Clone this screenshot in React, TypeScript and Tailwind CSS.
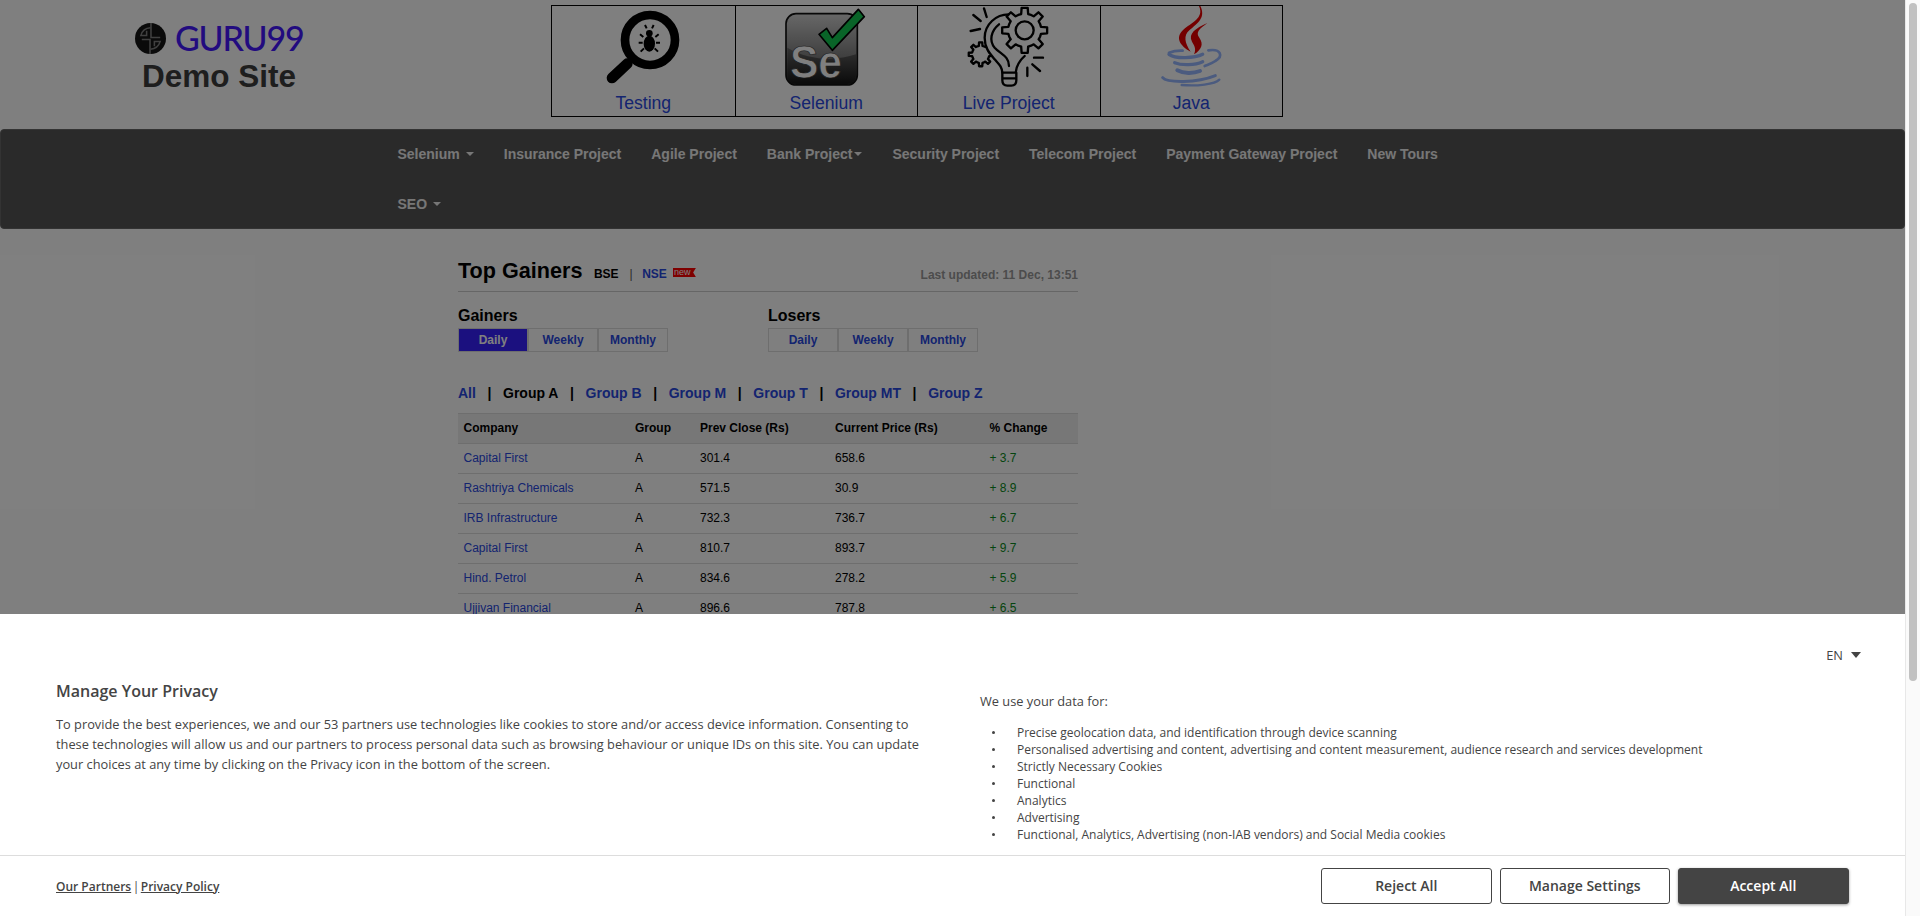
const arial = "font-['Liberation_Sans',Arial,sans-serif]";
const open = "font-['Open_Sans',sans-serif]";

const navItems = [
  { label: "Selenium", caret: true },
  { label: "Insurance Project" },
  { label: "Agile Project" },
  { label: "Bank Project", caret: true, tight: true },
  { label: "Security Project" },
  { label: "Telecom Project" },
  { label: "Payment Gateway Project" },
  { label: "New Tours" },
  { label: "SEO", caret: true },
];

const rows = [
  ["Capital First", "301.4", "658.6", "+ 3.7"],
  ["Rashtriya Chemicals", "571.5", "30.9", "+ 8.9"],
  ["IRB Infrastructure", "732.3", "736.7", "+ 6.7"],
  ["Capital First", "810.7", "893.7", "+ 9.7"],
  ["Hind. Petrol", "834.6", "278.2", "+ 5.9"],
  ["Ujjivan Financial", "896.6", "787.8", "+ 6.5"],
];

const groups = ["Group B", "Group M", "Group T", "Group MT", "Group Z"];

const uses = [
  "Precise geolocation data, and identification through device scanning",
  "Personalised advertising and content, advertising and content measurement, audience research and services development",
  "Strictly Necessary Cookies",
  "Functional",
  "Analytics",
  "Advertising",
  "Functional, Analytics, Advertising (non-IAB vendors) and Social Media cookies",
];

function gearPath(cx: number, cy: number, outer: number, inner: number, teeth: number) {
  const pts: string[] = [];
  for (let i = 0; i < teeth; i++) {
    const a = (i / teeth) * Math.PI * 2;
    const w = (Math.PI * 2) / teeth;
    const steps: [number, number][] = [
      [inner, -0.5 * w],
      [inner, -0.27 * w],
      [outer, -0.17 * w],
      [outer, 0.17 * w],
      [inner, 0.27 * w],
    ];
    for (const [r, o] of steps) {
      pts.push(`${(cx + r * Math.cos(a + o)).toFixed(1)} ${(cy + r * Math.sin(a + o)).toFixed(1)}`);
    }
  }
  return "M" + pts.join("L") + "Z";
}

function TestingIcon() {
  return (
    <svg viewBox="129 15 300 252" className="w-[100px] h-[84px]">
      <circle cx="300" cy="117" r="75" fill="none" stroke="#000" strokeWidth="26" />
      <line x1="232" y1="188" x2="186" y2="231" stroke="#000" strokeWidth="32" strokeLinecap="round" />
      <ellipse cx="298" cy="128" rx="17" ry="24" fill="#000" />
      <circle cx="298" cy="97" r="10" fill="#000" />
      <path
        d="M290 82l-5-10M306 82l5-10M280 108l-10-8M316 108l10-8M278 125h-12M318 125h12M282 142l-10 10M314 142l10 10"
        stroke="#000"
        strokeWidth="6"
        fill="none"
      />
    </svg>
  );
}

function SeleniumIcon() {
  return (
    <svg viewBox="138 15 300 252" className="w-[100px] h-[84px]">
      <defs>
        <linearGradient id="se-bg" x1="0" y1="0" x2="0" y2="1">
          <stop offset="0" stopColor="#d0d0d0" />
          <stop offset="0.6" stopColor="#808080" />
          <stop offset="1" stopColor="#1c1c1c" />
        </linearGradient>
        <linearGradient id="se-low" x1="0" y1="0" x2="0" y2="1">
          <stop offset="0" stopColor="#666" />
          <stop offset="1" stopColor="#161616" />
        </linearGradient>
      </defs>
      <rect x="168" y="38" width="214" height="214" rx="30" fill="url(#se-bg)" stroke="#111" strokeWidth="5" />
      <path d="M172 140C240 180 320 180 378 160V222Q378 248 352 248H198Q172 248 172 222Z" fill="url(#se-low)" />
      <text
        x="180"
        y="232"
        fontFamily="Liberation Sans, Arial, sans-serif"
        fontWeight="700"
        fontSize="136"
        textLength="156"
        lengthAdjust="spacingAndGlyphs"
        fill="#fff"
        stroke="#333"
        strokeWidth="2"
      >
        Se
      </text>
      <path d="M267 100L290 82L307 110L385 25L403 47L307 148Z" fill="#12c850" stroke="#000" strokeWidth="5" strokeLinejoin="round" />
    </svg>
  );
}

function LiveIcon() {
  return (
    <svg viewBox="115 15 300 252" className="w-[100px] h-[84px]">
      <g fill="#fff" stroke="#000" strokeWidth="7" strokeLinejoin="round" strokeLinecap="round">
        <path d={gearPath(180, 160, 36, 26, 8)} />
        <path d="M268 40C225 38 192 72 192 110C192 140 205 155 222 175C235 190 243 195 245 215L285 215C287 195 295 180 312 165L300 60Z" stroke="none" />
        <path d="M268 40C225 38 192 72 192 110C192 140 205 155 222 175C235 190 243 195 245 215L285 215C287 195 295 180 312 165" fill="none" />
        <path d="M235 70C210 90 205 120 222 140C240 160 265 165 265 195" fill="none" />
        <path d={gearPath(312, 88, 68, 50, 8)} />
        <circle cx="312" cy="88" r="27" />
        <path d="M245 215V238Q245 254 260 254H272Q287 254 287 238V215M245 232H287" fill="none" />
        <path d="M190 22L198 48M158 42L180 60M150 90L178 84M340 170H367M335 190L358 210M320 200V225" fill="none" />
      </g>
    </svg>
  );
}

function JavaIcon() {
  return (
    <svg viewBox="123 15 300 252" className="w-[100px] h-[84px]">
      <path d="M297 15C314 52 272 66 250 86C224 110 240 134 272 152C254 126 250 104 268 88C294 66 318 50 301 15Z" fill="#e80000" />
      <path d="M322 66C286 82 264 98 276 122C286 138 288 146 282 160C304 146 312 130 298 110C286 94 298 84 322 66Z" fill="#e80000" />
      <g fill="none" stroke="#96b6ff" strokeLinecap="round">
        <path d="M207 155Q225 148 248 149" strokeWidth="8" />
        <path d="M207 160C225 174 285 172 308 160" strokeWidth="10" />
        <path d="M325 148C364 142 370 166 346 180C336 187 326 190 314 195" strokeWidth="8" />
        <path d="M224 185C245 194 285 193 308 182" strokeWidth="10" />
        <path d="M232 208C250 218 280 218 300 210" strokeWidth="12" />
        <path d="M188 230C200 245 290 247 346 224" strokeWidth="9" />
        <path d="M245 252C290 256 345 250 358 236" strokeWidth="7" />
      </g>
    </svg>
  );
}

function LogoMark() {
  return (
    <svg viewBox="0 0 32 32" className="w-[31px] h-[31px] shrink-0">
      <circle cx="16" cy="16" r="16" fill="#141414" />
      <g fill="none" stroke="#808080" strokeWidth="1.6">
        <path d="M16.5 0V15H26" />
        <path d="M15.5 32V17H7" />
        <path d="M16 5A11 11 0 0 0 6 13H12V8" />
        <path d="M16 27A11 11 0 0 0 26 19H20V24" />
      </g>
    </svg>
  );
}

function Tabs({ active }: { active: boolean }) {
  return (
    <div className="flex mt-[2px]">
      {["Daily", "Weekly", "Monthly"].map((t, i) => (
        <div
          key={t}
          className={`w-[70px] h-[24px] flex items-center justify-center text-[12px] font-bold border border-[#ddd] ${
            i === 0 && active ? "bg-[#3620ff] text-white" : "text-[#2848e0]"
          }`}
        >
          {t}
        </div>
      ))}
    </div>
  );
}

export default function App() {
  const tiles = [
    { label: "Testing", icon: <TestingIcon /> },
    { label: "Selenium", icon: <SeleniumIcon /> },
    { label: "Live Project", icon: <LiveIcon /> },
    { label: "Java", icon: <JavaIcon /> },
  ];

  return (
    <div className={`relative flex h-[916px] overflow-hidden bg-white ${arial}`}>
      <div className="relative w-[1905px] shrink-0 overflow-hidden">
        {/* header */}
        <div className="flex h-[129px]">
          <div className="w-[551px] shrink-0 pl-[135px] pt-[22px]">
            <div className="flex items-center h-[32px] gap-[9px]">
              <LogoMark />
              <span className="font-['Lato',sans-serif] text-[34px] tracking-[-1.2px] leading-none font-medium text-[#4416ff]">GURU99</span>
            </div>
            <div className="pl-[7px] mt-[4px] text-[31.5px] leading-[36px] font-bold text-[#3c3c3c]">Demo Site</div>
          </div>
          <div className="flex h-[112px] mt-[5px] border border-black">
            {tiles.map((t, i) => (
              <div
                key={t.label}
                className={`w-[182.5px] flex flex-col items-center ${i > 0 ? "border-l border-black" : ""}`}
              >
                {t.icon}
                <div className="text-[17.6px] leading-[20px] mt-[3px] text-[#2848e0]">{t.label}</div>
              </div>
            ))}
          </div>
        </div>

        {/* nav */}
        <div className="h-[100px] rounded bg-[#555] border border-[#666] pl-[381.5px]">
          <div className="flex flex-wrap w-[1100px] -mt-[1px]">
            {navItems.map((n) => (
              <div key={n.label} className="h-[50px] px-[15px] flex items-center text-[14px] font-bold text-[#eee]">
                {n.label}
                {n.caret && (
                  <span
                    className={`${n.tight ? "ml-[2px]" : "ml-[6px]"} w-0 h-0 border-x-[4px] border-x-transparent border-t-[4px] border-t-[#eee]`}
                  />
                )}
              </div>
            ))}
          </div>
        </div>

        {/* gainers */}
        <div className="w-[620px] ml-[458px] mt-[27px]">
          <div className="flex items-end h-[36px] pb-[7px] border-b border-[#ccc]">
            <span className="text-[21.6px] leading-[26px] font-bold text-black">Top Gainers</span>
            <span className="ml-[11.5px] text-[12px] leading-[20px] font-bold text-black">BSE</span>
            <span className="ml-[11px] text-[12px] leading-[20px] text-[#555]">|</span>
            <span className="ml-[9.5px] text-[12px] leading-[20px] font-bold text-[#2848e0]">NSE</span>
            <span className="relative -top-[7px] ml-[6px] h-[9px] w-[23px] bg-[#ff0000] text-white text-[9px] leading-[8px] pl-[1px] [clip-path:polygon(0_0,100%_0,88%_50%,100%_100%,0_100%)]">
              new
            </span>
            <span className="ml-auto text-[12px] leading-[14px] font-bold text-[#999] mb-[2px]">
              Last updated: 11 Dec, 13:51
            </span>
          </div>

          <div className="flex mt-[14px]">
            <div className="w-[310px]">
              <div className="text-[16px] leading-[20px] font-bold text-black">Gainers</div>
              <Tabs active />
            </div>
            <div>
              <div className="text-[16px] leading-[20px] font-bold text-black">Losers</div>
              <Tabs active={false} />
            </div>
          </div>

          <div className="flex items-center gap-[11.6px] mt-[32.5px] h-[18px] text-[14px] font-bold">
            <span className="text-[#2848e0]">All</span>
            <span className="text-black">|</span>
            <span className="text-black">Group A</span>
            {groups.map((g) => (
              <div key={g} className="flex items-center gap-[11.6px]">
                <span className="text-black">|</span>
                <span className="text-[#2848e0]">{g}</span>
              </div>
            ))}
          </div>

          <table className="mt-[10px] w-[620px] table-fixed border-collapse text-[12px] text-black">
            <colgroup>
              <col className="w-[171.5px]" />
              <col className="w-[65px]" />
              <col className="w-[135px]" />
              <col className="w-[154.5px]" />
              <col className="w-[94px]" />
            </colgroup>
            <thead>
              <tr className="h-[30px] bg-[#eee] border-y border-[#ddd] text-left font-bold">
                <th className="pl-[5.5px]">Company</th>
                <th className="pl-[5.5px]">Group</th>
                <th className="pl-[5.5px]">Prev Close (Rs)</th>
                <th className="pl-[5.5px]">Current Price (Rs)</th>
                <th className="pl-[5.5px]">% Change</th>
              </tr>
            </thead>
            <tbody>
              {rows.map((r, i) => (
                <tr key={i} className="h-[30px] border-b border-[#ddd]">
                  <td className="pl-[5.5px] text-[#2848e0]">{r[0]}</td>
                  <td className="pl-[5.5px]">A</td>
                  <td className="pl-[5.5px]">{r[1]}</td>
                  <td className="pl-[5.5px]">{r[2]}</td>
                  <td className="pl-[5.5px] text-[#0c8a20]">{r[3]}</td>
                </tr>
              ))}
            </tbody>
          </table>
        </div>

        {/* dim layer under the consent banner */}
        <div className="absolute inset-0 bg-black/50" />

        {/* consent banner */}
        <div className={`absolute left-0 right-0 bottom-0 h-[302px] bg-white text-[#444] ${open}`}>
          <div className="flex h-[242px] border-b border-[#ddd]">
            <div className="w-[980px] shrink-0 pl-[56px] pr-[50px] flex flex-col justify-center pb-[16px]">
              <div className="text-[16px] leading-[22px] font-semibold">Manage Your Privacy</div>
              <p className="mt-[12px] text-[12.8px] leading-[20px]">
                To provide the best experiences, we and our 53 partners use technologies like cookies to store and/or
                access device information. Consenting to these technologies will allow us and our partners to process
                personal data such as browsing behaviour or unique IDs on this site. You can update your choices at any
                time by clicking on the Privacy icon in the bottom of the screen.
              </p>
            </div>
            <div className="flex-1 pr-[44px] pt-[32px]">
              <div className="flex justify-end items-center gap-[8px] text-[12.8px] leading-[18px]">
                EN
                <span className="w-0 h-0 border-x-[5px] border-x-transparent border-t-[6px] border-t-[#444]" />
              </div>
              <div className="mt-[28px] text-[12.8px] leading-[18px]">We use your data for:</div>
              <ul className="mt-[14px]">
                {uses.map((u) => (
                  <li key={u} className="flex h-[17px] items-center text-[12px]">
                    <span className="ml-[12px] w-[3px] h-[3px] rounded-full bg-[#444] shrink-0" />
                    <span className="ml-[22px]">{u}</span>
                  </li>
                ))}
              </ul>
            </div>
          </div>
          <div className="flex items-center justify-between h-[60px] pl-[56px] pr-[56.5px] pb-[1px]">
            <div className="flex items-center gap-[1.5px] text-[12px] font-semibold pt-[2px]">
              <span className="underline">Our Partners</span>
              <span className="font-normal">|</span>
              <span className="underline">Privacy Policy</span>
            </div>
            <div className="flex gap-[8px] text-[14px] font-semibold">
              <button className="w-[170.5px] h-[36px] rounded-[3px] border border-[#444] bg-white">Reject All</button>
              <button className="w-[170.5px] h-[36px] rounded-[3px] border border-[#444] bg-white">Manage Settings</button>
              <button className="w-[170.5px] h-[36px] rounded-[3px] border border-[#444] bg-[#444] text-white shadow-[0_1px_3px_rgba(0,0,0,0.4)]">
                Accept All
              </button>
            </div>
          </div>
        </div>
      </div>

      {/* page scrollbar */}
      <div className="w-[15px] shrink-0 bg-[#fafafa] border-l border-[#e8e8e8] pl-[3px] pt-[3px]">
        <div className="w-[8px] h-[678px] rounded-full bg-[#c1c1c1]" />
      </div>
    </div>
  );
}
